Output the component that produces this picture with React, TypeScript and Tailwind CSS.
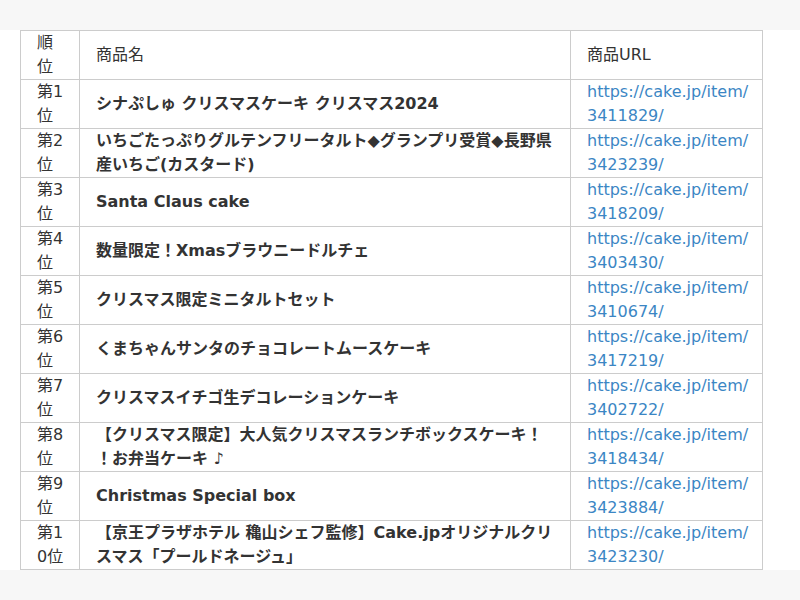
type Item = {
  rank: string;
  name: React.ReactNode;
  id: string;
};

const items: Item[] = [
  { rank: "第1位", name: "シナぷしゅ クリスマスケーキ クリスマス2024", id: "3411829" },
  {
    rank: "第2位",
    name: "いちごたっぷりグルテンフリータルト◆グランプリ受賞◆長野県産いちご(カスタード)",
    id: "3423239",
  },
  { rank: "第3位", name: "Santa Claus cake", id: "3418209" },
  { rank: "第4位", name: "数量限定！Xmasブラウニードルチェ", id: "3403430" },
  { rank: "第5位", name: "クリスマス限定ミニタルトセット", id: "3410674" },
  { rank: "第6位", name: "くまちゃんサンタのチョコレートムースケーキ", id: "3417219" },
  { rank: "第7位", name: "クリスマスイチゴ生デコレーションケーキ", id: "3402722" },
  {
    rank: "第8位",
    name: (
      <>
        【クリスマス限定】大人気クリスマスランチボックスケーキ！
        <br />
        ！お弁当ケーキ ♪
      </>
    ),
    id: "3418434",
  },
  { rank: "第9位", name: "Christmas Special box", id: "3423884" },
  {
    rank: "第10位",
    name: "【京王プラザホテル 穐山シェフ監修】Cake.jpオリジナルクリスマス「プールドネージュ」",
    id: "3423230",
  },
];

export default function App() {
  return (
    <div
      className="min-h-screen bg-[#f7f7f7] pt-[30px] text-[#333] text-base leading-6"
      style={{ fontFamily: '"DejaVu Sans", "Noto Sans CJK JP", sans-serif' }}
    >
      <div className="bg-white pl-[20px]">
        <table className="table-fixed border-collapse w-[742px]">
          <colgroup>
            <col className="w-[59px]" />
            <col className="w-[491px]" />
            <col className="w-[192px]" />
          </colgroup>
          <thead>
            <tr className="h-[49px]">
              <th className="border border-[#cccccc] pl-4 pr-3 py-0 font-normal text-left align-middle break-all">
                順位
              </th>
              <th className="border border-[#cccccc] px-4 py-0 font-normal text-left align-middle">
                商品名
              </th>
              <th className="border border-[#cccccc] pl-4 pr-2 py-0 font-normal text-left align-middle">
                商品URL
              </th>
            </tr>
          </thead>
          <tbody>
            {items.map((it) => (
              <tr key={it.id} className="h-[49px]">
                <td className="border border-[#cccccc] pl-4 pr-3 py-0 align-middle break-all">
                  {it.rank}
                </td>
                <td className="border border-[#cccccc] px-4 py-0 align-middle font-bold">
                  {it.name}
                </td>
                <td className="border border-[#cccccc] pl-4 pr-2 py-0 align-middle">
                  <a href="#" className="text-[#3b86c4]">
                    https://cake.jp/item/
                    <wbr />
                    {it.id}/
                  </a>
                </td>
              </tr>
            ))}
          </tbody>
        </table>
      </div>
    </div>
  );
}
